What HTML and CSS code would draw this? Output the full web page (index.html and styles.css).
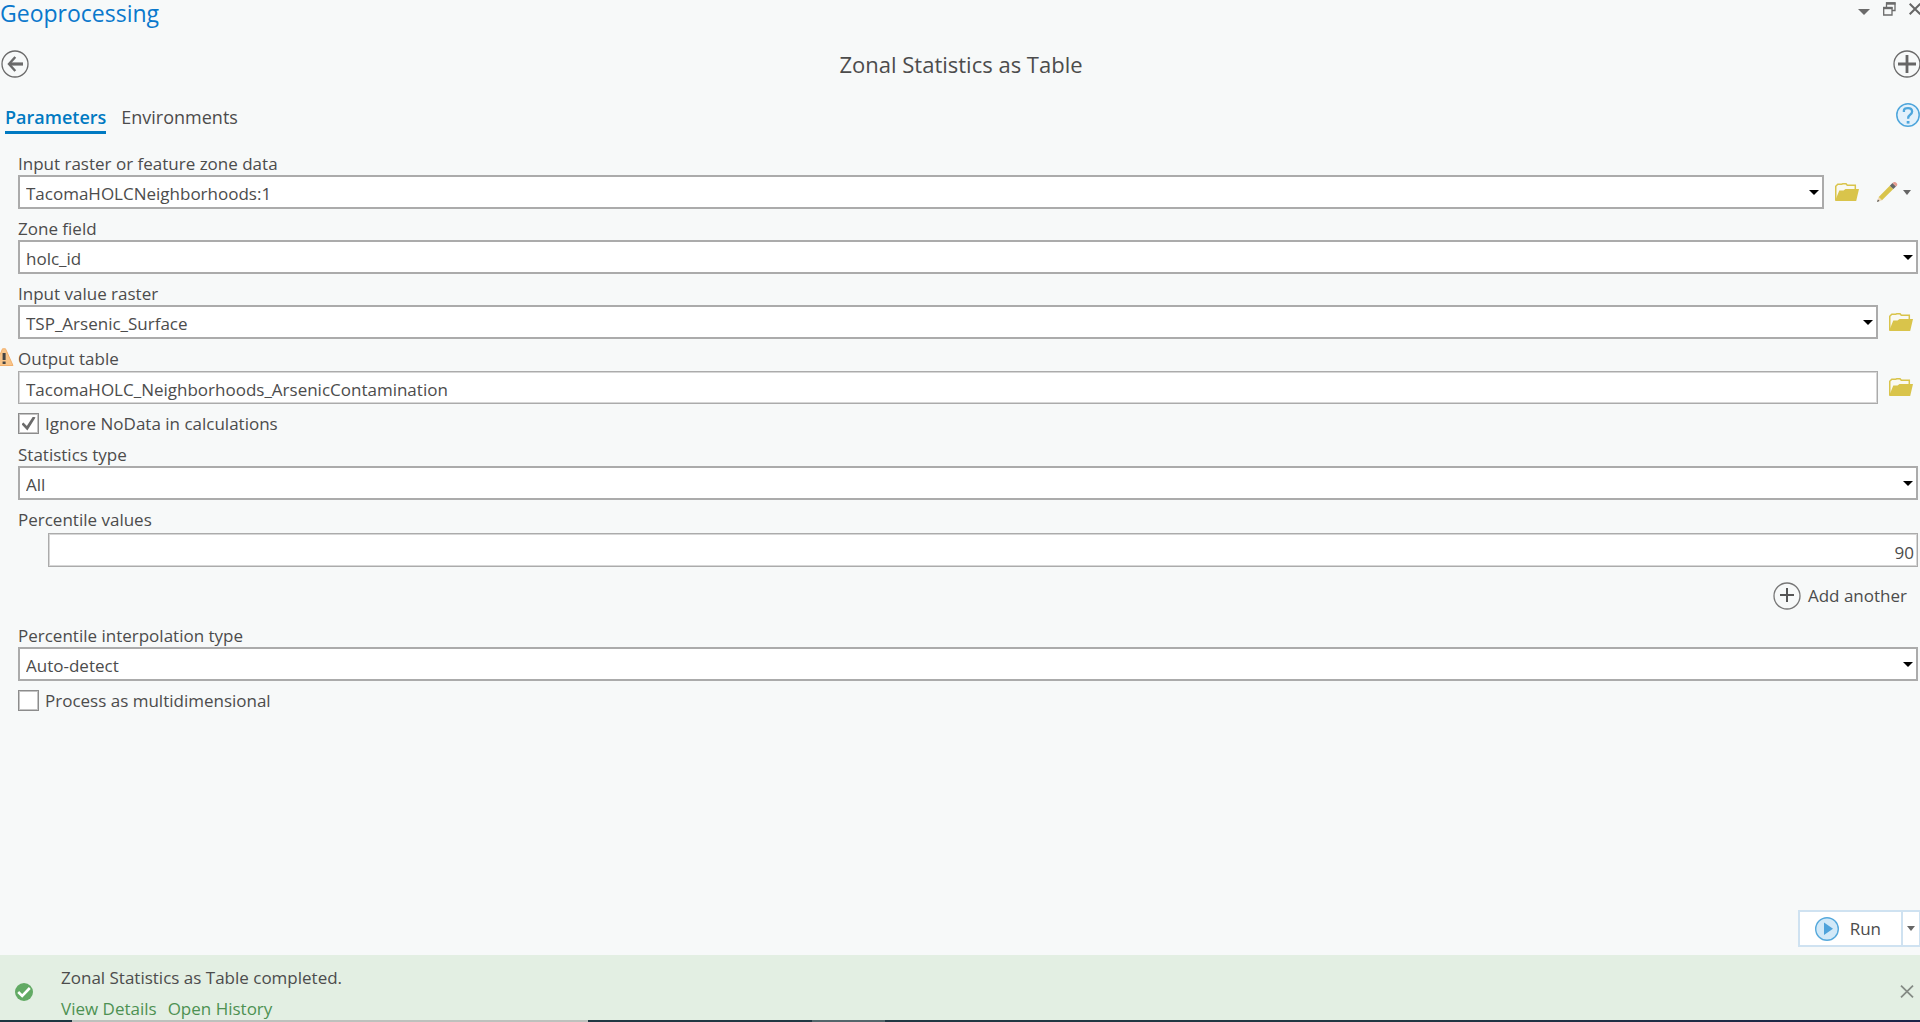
FILE: index.html
```html
<!DOCTYPE html>
<html lang="en">
<head>
<meta charset="utf-8">
<title>Geoprocessing</title>
<link rel="stylesheet" href="styles.css">
</head>
<body>
<svg class="defs" aria-hidden="true">
  <symbol id="caret" viewBox="0 0 10 5"><path d="M0 0h10L5 5z"/></symbol>
  <symbol id="folder" viewBox="0 0 24 18">
    <path d="M.75 17V3.2L2.8 1.2h3.7L8 .7h3l1.300 1.500h8V7" fill="#f9f9f2" stroke="#d9c44b" stroke-width="1.500"/>
    <path d="M0 18 4.300 7.600h4.200L10.500 6H24l-2.800 12z" fill="#d9c44b"/>
  </symbol>
  <symbol id="plus" viewBox="0 0 28 28"><circle cx="14" cy="14" r="13" fill="none" stroke="currentColor" stroke-width="1.300"/></symbol>
</svg>
<div class="pane">
  <header class="titlebar">
    <h1 class="pane-title">Geoprocessing</h1>
    <div class="window-buttons">
      <button class="icon-button" aria-label="Options"><svg width="12" height="6" viewBox="0 0 12 6"><path d="M0 0h12L6 6z" fill="#6b6b6b"/></svg></button>
      <button class="icon-button restore" aria-label="Restore"><svg width="13" height="14" viewBox="0 0 13 14" fill="none" stroke="#6b6b6b"><path d="M3.500 5V1h8.500v7.500H9" stroke-width="1.300"/><path d="M3 1.500H12.500" stroke-width="2.400"/><path d="M.7 5.700h8.300v7.300H.7z" stroke-width="1.300"/><path d="M0 6h9.500" stroke-width="2.400"/></svg></button>
      <button class="icon-button" aria-label="Close"><svg width="11" height="12" viewBox="0 0 11 12"><path d="M.7.7l10.600 10.600M11.300.7.7 11.300" stroke="#666" stroke-width="2"/></svg></button>
    </div>
  </header>

  <div class="tool-header">
    <button class="icon-button" aria-label="Back"><svg width="28" height="28" viewBox="0 0 28 28" fill="none" stroke="#6a6a6a"><circle cx="14" cy="14" r="13" stroke-width="1.300"/><path d="M8 14h14" stroke-width="3.200"/><path d="M14.300 7 8 14l6.300 7" stroke-width="2.400"/></svg></button>
    <h2 class="tool-title">Zonal Statistics as Table</h2>
    <button class="icon-button" aria-label="Add"><svg width="27" height="28" viewBox="0 0 27 28"><circle cx="14" cy="14" r="13" fill="none" stroke="#6a6a6a" stroke-width="1.300"/><path d="M14 5v18M5 14h18" stroke="#666" stroke-width="2.800"/></svg></button>
  </div>

  <nav class="tabs">
    <a class="tab active" href="#parameters">Parameters</a>
    <a class="tab" href="#environments">Environments</a>
    <button class="icon-button help" aria-label="Help"><svg width="24" height="24" viewBox="0 0 24 24"><circle cx="12" cy="12" r="11.200" fill="#e3f1fb" stroke="#4ea6dc" stroke-width="1.500"/><path d="M7.900 9V7.500Q8 5.200 12 5.200t4.100 3.200q0 1.900-2 3.300-2 1.300-2 4" fill="none" stroke="#4ea6dc" stroke-width="2.300"/><path d="M10.700 18h2.800v2.600h-2.800z" fill="#4ea6dc"/></svg></button>
  </nav>

  <form class="form" id="parameters">
    <label class="label" for="zone-data">Input raster or feature zone data</label>
    <div class="row">
      <div class="combo"><select id="zone-data"><option>TacomaHOLCNeighborhoods:1</option></select><svg class="caret"><use href="#caret"/></svg></div>
      <button type="button" class="icon-button browse" aria-label="Browse zone data"><svg width="24" height="18"><use href="#folder"/></svg></button>
      <button type="button" class="icon-button edit" aria-label="Edit">
        <svg width="22" height="22" viewBox="0 0 22 22"><path d="M1 21l1.700-5 3.300 3.200z" fill="#f0d9b8"/><path d="M1 21l.9-2.500 1.600 1.600z" fill="#555"/><path d="M2.700 16 13.800 4.700l3.500 3.400L6 19.200z" fill="#d9c44b"/><path d="M13.800 4.700 16.500 2l3.500 3.500-2.700 2.600z" fill="#666"/><path d="M16.500 2q2.200-2 4 0t-.5 3.500z" fill="#e59a8f"/></svg>
        <svg width="8" height="5" viewBox="0 0 8 5"><path d="M0 0h8L4 5z" fill="#666"/></svg>
      </button>
    </div>

    <label class="label" for="zone-field">Zone field</label>
    <div class="row"><div class="combo"><select id="zone-field"><option>holc_id</option></select><svg class="caret"><use href="#caret"/></svg></div></div>

    <label class="label" for="value-raster">Input value raster</label>
    <div class="row">
      <div class="combo"><select id="value-raster"><option>TSP_Arsenic_Surface</option></select><svg class="caret"><use href="#caret"/></svg></div>
      <button type="button" class="icon-button browse end" aria-label="Browse value raster"><svg width="24" height="18"><use href="#folder"/></svg></button>
    </div>

    <label class="label" for="output-table"><svg class="warning" width="17" height="18" viewBox="0 0 17 18"><path d="M-4.500 17.500 2.500 0.800h3L13 17.500z" fill="#f8c58a" stroke="#f2b06c"/><path d="M2.600 5h3v7h-3zM2.600 13.500h3v2.500h-3z" fill="#444"/></svg>Output table</label>
    <div class="row">
      <input class="text" id="output-table" type="text" value="TacomaHOLC_Neighborhoods_ArsenicContamination">
      <button type="button" class="icon-button browse end" aria-label="Browse output table"><svg width="24" height="18"><use href="#folder"/></svg></button>
    </div>

    <label class="check"><input type="checkbox" checked>Ignore NoData in calculations</label>

    <label class="label" for="stat-type">Statistics type</label>
    <div class="row"><div class="combo"><select id="stat-type"><option>All</option></select><svg class="caret"><use href="#caret"/></svg></div></div>

    <label class="label" for="percentile">Percentile values</label>
    <div class="row indent"><input class="text number" id="percentile" type="text" value="90"></div>
    <button type="button" class="add-another"><svg width="28" height="28" viewBox="0 0 28 28"><use href="#plus"/><path d="M14 6v14M7 13h14" stroke="#555" stroke-width="2"/></svg>Add another</button>

    <label class="label" for="interpolation">Percentile interpolation type</label>
    <div class="row"><div class="combo"><select id="interpolation"><option>Auto-detect</option></select><svg class="caret"><use href="#caret"/></svg></div></div>

    <label class="check"><input type="checkbox">Process as multidimensional</label>
  </form>

  <div class="run-bar">
    <button class="run"><svg width="24" height="24" viewBox="0 0 24 24"><circle cx="12" cy="12" r="11.300" fill="#d2e9f8" stroke="#56a9dc" stroke-width="1.400"/><path d="M9 5.500v12.500l9-6.200z" fill="#4fa3db"/></svg>Run</button>
    <button class="run-menu" aria-label="Run options"><svg width="8" height="5" viewBox="0 0 8 5"><path d="M0 0h8L4 5z" fill="#666"/></svg></button>
  </div>

  <footer class="status">
    <svg width="18" height="18" viewBox="0 0 18 18"><circle cx="9" cy="9" r="9" fill="#62aa64"/><path d="M3.200 9l4 4 7.600-8" fill="none" stroke="#fff" stroke-width="2.600"/></svg>
    <div class="message">
      <p>Zonal Statistics as Table completed.</p>
      <p class="links"><a href="#details">View Details</a><a href="#history">Open History</a></p>
    </div>
    <button class="icon-button" aria-label="Dismiss"><svg width="14" height="13" viewBox="0 0 14 13"><path d="M1 .7l12 11.600M13 .7 1 12.300" stroke="#858b85" stroke-width="1.800"/></svg></button>
  </footer>
  <div class="edge"></div>
</div>
</body>
</html>
```
FILE: styles.css
```css
* { box-sizing: border-box; }
body {
  margin: 0;
  background: #f7f9f9;
  color: #4c4c4c;
  font: 17px/24px "Open Sans", "Noto Sans", sans-serif;
}
h1, h2, p { margin: 0; font-weight: 400; }
button, input, select { font: inherit; color: inherit; }
button { cursor: pointer; }
svg { display: block; flex: none; }
.defs { position: absolute; width: 0; height: 0; }
.icon-button { display: flex; align-items: center; padding: 0; border: 0; background: none; color: #6a6a6a; flex: none; }

.pane { display: flex; flex-direction: column; min-height: 100vh; }
.titlebar { display: flex; justify-content: space-between; height: 28px; }
.pane-title { font-size: 23px; line-height: 26px; color: #0a78cc; }
.window-buttons { display: flex; align-items: flex-start; gap: 13px; padding-top: 3px; }
.window-buttons .icon-button { height: 12px; }
.window-buttons .icon-button:first-child { height: 18px; }

.tool-header { display: flex; align-items: center; justify-content: space-between; height: 72px; padding-left: 1px; }
.tool-title { font-size: 22px; line-height: 30px; }

.tabs { display: flex; align-items: flex-start; gap: 15px; height: 52px; padding: 3px 0 0 5px; }
.tab { color: inherit; text-decoration: none; font-size: 18px; line-height: 28px; border-bottom: 3px solid transparent; }
.tab.active { color: #007ac2; font-weight: 600; border-color: #007ac2; }
.help { margin-left: auto; }

.form { flex: 1; display: flex; flex-direction: column; padding: 0 2px 0 18px; }
.label { position: relative; margin-top: 8px; line-height: 23px; }
.form > .label:first-child { margin-top: 0; }
.warning { position: absolute; left: -18px; top: 1px; }
.row { display: flex; align-items: center; height: 34px; }
.row.indent { margin: 2px 0 0 30px; }
.combo { position: relative; flex: 1; }
.combo select {
  display: block; width: 100%; height: 34px; padding: 3px 24px 0 6px;
  appearance: none; border: 2px solid #ababab; border-radius: 0; background: #fff;
}
.caret { position: absolute; right: 5px; top: 15px; width: 10px; height: 5px; pointer-events: none; fill: #000; }
.text {
  flex: 1; min-width: 0; height: 33px; padding: 4px 6px 0 7px;
  border: 1px solid #ababab; border-radius: 0; background: #fff;
  box-shadow: inset 0 0 0 1px #d6d6d6;
}
.number { text-align: right; height: 34px; padding-right: 3px; }
.browse { margin: 0 17px 0 11px; }
.browse.end { margin-right: 5px; }
.edit { gap: 5px; margin-right: 7px; }

.check { display: flex; align-items: center; gap: 6px; height: 23px; margin-top: 8px; }
.check input {
  appearance: none; width: 21px; height: 21px; margin: 0; display: grid; place-items: center;
  border: 1px solid #8c8c8c; background: #fff; box-shadow: inset 0 0 0 1px #c4c4c4;
}
.check input:checked::before {
  content: ""; width: 14px; height: 14px; background: #6b6b6b;
  clip-path: polygon(0 55%, 14% 42%, 38% 68%, 82% 0, 100% 8%, 42% 100%);
}
.add-another {
  align-self: flex-end; display: flex; align-items: center; gap: 7px; height: 28px;
  margin: 15px 11px 6px 0; padding: 0; border: 0; background: none;
}
.add-another svg { color: #777; }

.run-bar { display: flex; justify-content: flex-end; margin-bottom: 8px; }
.run, .run-menu { display: flex; align-items: center; height: 37px; border: 2px solid #cfe2f1; background: #fff; }
.run { gap: 11px; padding: 0 20px 0 15px; }
.run-menu { width: 17px; justify-content: center; padding: 0; border-left: 0; border-right-width: 1px; }

.status { display: flex; align-items: center; height: 65px; padding: 0 6px 0 15px; background: #e3efe3; }
.status > .icon-button { margin-top: 8px; }
.status > svg { margin-top: 8px; }
.message { flex: 1; padding: 11px 0 0 28px; }
.message p + p { margin-top: 7px; }
.links { display: flex; gap: 11px; }
.links a { color: #4d9152; text-decoration: none; }
.edge { height: 2px; background: linear-gradient(90deg, #1d3641 72px, #bdc1bd 72px 588px, #203843 588px 812px, #53666b 812px 885px, #203843 885px 1400px, #1b2348); }
```
